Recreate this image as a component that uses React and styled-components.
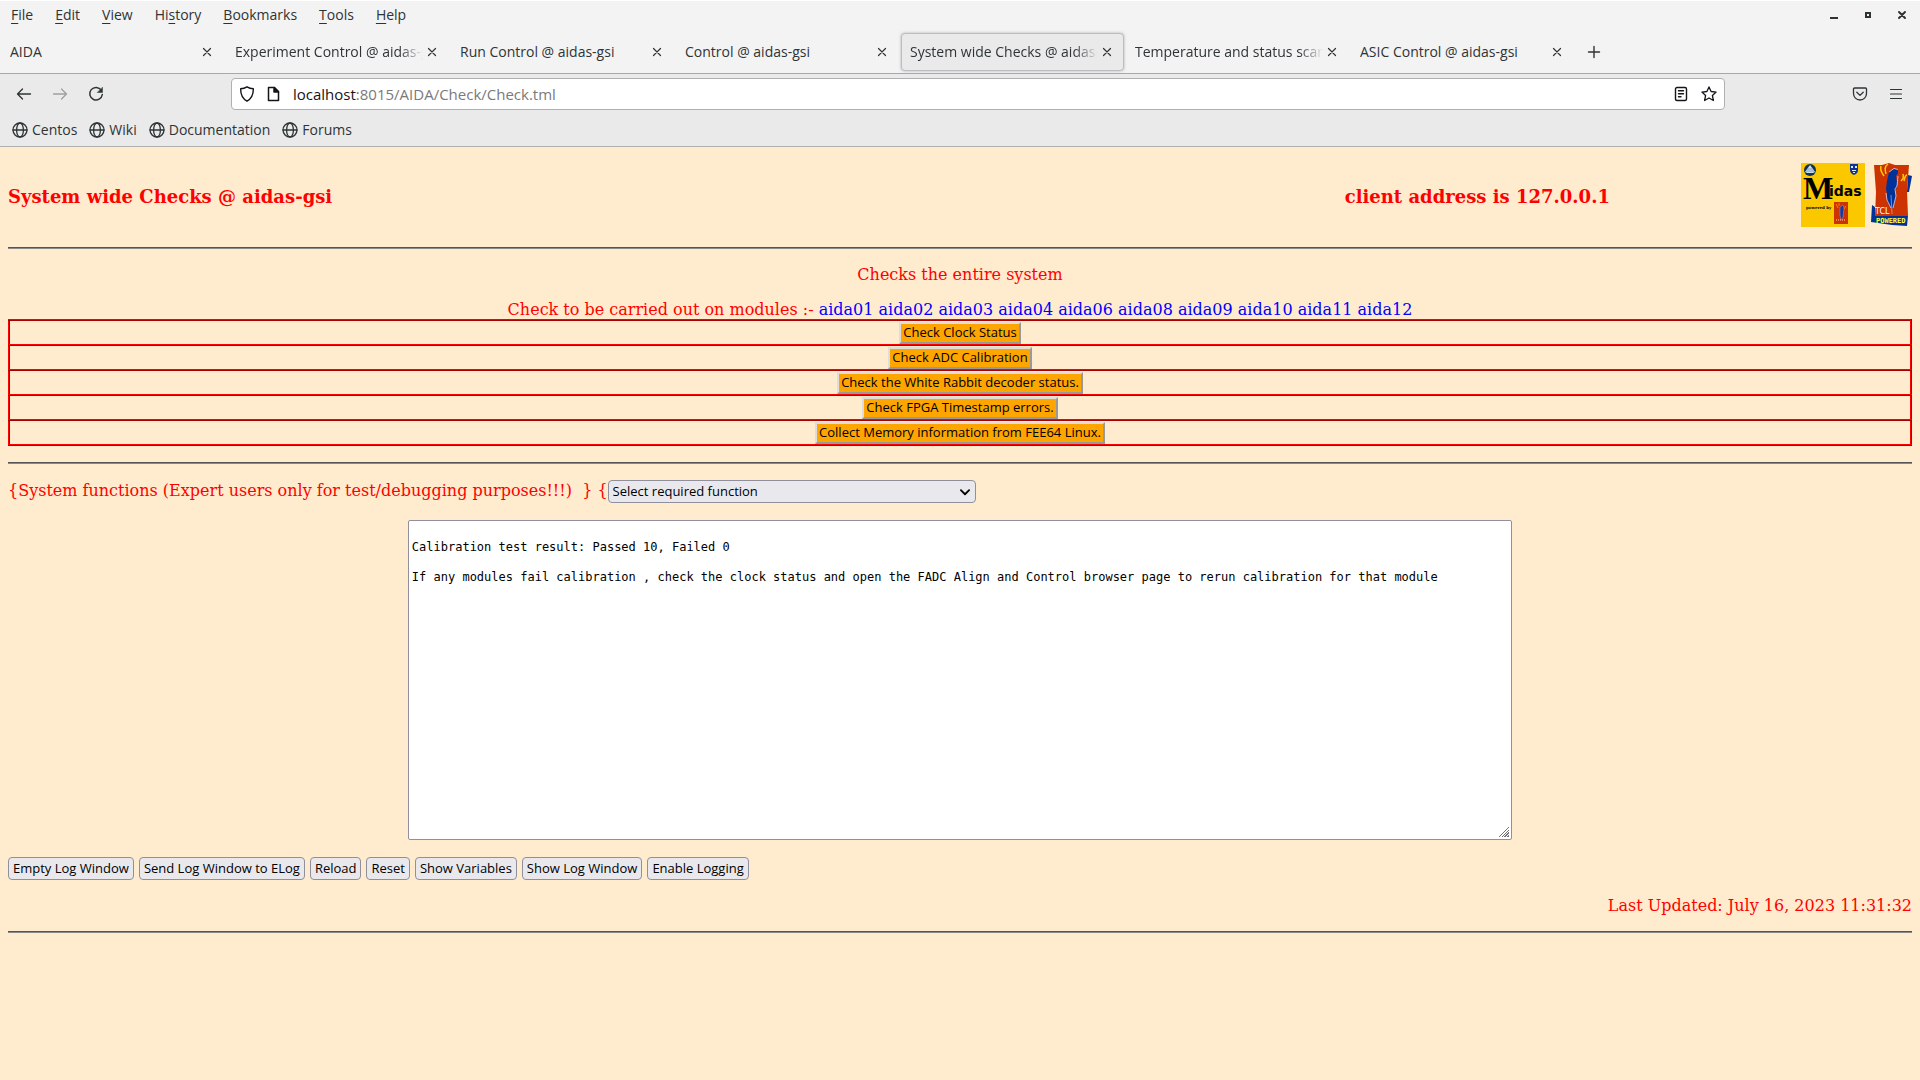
import React, { useState } from "react";
import styled, { createGlobalStyle } from "styled-components";

const GlobalStyle = createGlobalStyle`
  :root {
    --clr-chrome: #f3f3f3;
    --clr-toolbar: #eaeaea;
    --clr-ink: #2e3436;
    --clr-line: #b0b0b0;
    --clr-page: #ffebcd;
    --clr-control: #e9e9ed;
    --clr-edge: #8f8f9d;
    --ff-ui: "Open Sans", "Noto Sans", sans-serif;
    --ff-serif: "DejaVu Serif", serif;
    --ff-mono: "DejaVu Sans Mono", monospace;
  }

  * {
    box-sizing: border-box;
  }

  body {
    margin: 0;
    background: var(--clr-page);
    color: red;
    font-family: var(--ff-serif);
    font-size: 16px;
    line-height: 19px;
  }
`;

/* ---------- browser window ---------- */

const Chrome = styled.header`
  font-family: var(--ff-ui);
  font-size: 14px;
  line-height: 20px;
  color: var(--clr-ink);
  background: var(--clr-chrome);
  border-bottom: 1px solid var(--clr-line);
`;

const MenuBar = styled.div`
  display: flex;
  align-items: center;
  height: 30px;
  padding: 0 9px 1px 0;
  border-top: 1px solid #fff;
`;

const MenuItem = styled.button`
  padding: 0 11px;
  border: 0;
  background: none;
  color: inherit;
  font: inherit;

  u {
    text-underline-offset: 3px;
  }
`;

const WindowButtons = styled.div`
  display: flex;
  gap: 16px;
  margin-left: auto;
`;

const IconButton = styled.button`
  display: grid;
  place-items: center;
  flex: none;
  width: ${(p) => p.$size || 18}px;
  height: ${(p) => p.$size || 18}px;
  padding: 0;
  border: 0;
  background: none;
  color: inherit;
  opacity: ${(p) => (p.disabled ? 0.4 : 1)};
`;

const TabStrip = styled.nav`
  display: flex;
  align-items: center;
  gap: 2px;
  padding: 3px 1px 2px;
  border-bottom: 1px solid #a8a8a8;
`;

const Tab = styled.div`
  display: flex;
  align-items: center;
  flex: 0 1 223px;
  min-width: 0;
  height: 38px;
  padding: 0 7px 0 8px;
  border: 1px solid ${(p) => (p.$active ? "#bcbcc4" : "transparent")};
  border-radius: 4px;
  background: ${(p) => (p.$active ? "var(--clr-toolbar)" : "none")};
  box-shadow: ${(p) => (p.$active ? "0 0 3px rgba(90, 90, 110, 0.4)" : "none")};
`;

const TabLabel = styled.button`
  flex: 1;
  min-width: 0;
  padding: 0;
  border: 0;
  background: none;
  color: inherit;
  font: inherit;
  text-align: left;
  white-space: nowrap;
  overflow: hidden;
  mask-image: ${(p) =>
    p.$fade ? "linear-gradient(to left, transparent, #000 24px)" : "none"};
`;

const NavBar = styled.div`
  display: grid;
  grid-template-columns: 219px 1fr 183px;
  align-items: center;
  padding: 4px 12px;
  background: var(--clr-toolbar);
`;

const NavGroup = styled.div`
  display: flex;
  gap: 12px;
  justify-content: ${(p) => (p.$end ? "flex-end" : "flex-start")};
`;

const UrlBar = styled.div`
  display: flex;
  align-items: center;
  height: 32px;
  padding: 0 3px;
  border: 1px solid var(--clr-line);
  border-radius: 4px;
  background: #fff;
  color: #15141a;
  font-size: 15px;

  .host {
    margin-left: 6px;
  }

  input {
    flex: 1;
    min-width: 0;
    padding: 0;
    border: 0;
    outline: 0;
    background: none;
    color: #7a7a7c;
    font: inherit;
  }
`;

const UrlIcons = styled.div`
  display: flex;
  gap: 4px;
`;

const Bookmarks = styled.div`
  display: flex;
  align-items: center;
  gap: 12px;
  height: 32px;
  padding: 0 12px;
  background: var(--clr-toolbar);
`;

const Bookmark = styled.a`
  display: flex;
  align-items: center;
  gap: 4px;
  color: inherit;
  text-decoration: none;
`;

/* ---------- page ---------- */

const Page = styled.main`
  padding: 16px 8px;
`;

const Rule = styled.hr`
  height: 2px;
  margin: 16px 0;
  border: 0;
  border-top: 1px solid #555;
  border-bottom: 1px solid #888;
`;

const Banner = styled.div`
  display: grid;
  grid-template-columns: 1fr 34% auto;
  align-items: center;
  margin-bottom: 20px;

  h3 {
    margin: 0;
    padding-top: 2px;
    font-size: 18px;
  }

  h3 + h3 {
    text-align: center;
  }
`;

const Logos = styled.div`
  display: flex;
  gap: 6px;

  svg {
    display: block;
  }
`;

const Centered = styled.p`
  margin: 0 0 16px;
  text-align: center;
`;

const Modules = styled.span`
  color: blue;
`;

const CheckTable = styled.table`
  width: 100%;
  border: 2px inset red;
  border-collapse: collapse;

  td {
    height: 25px;
    padding: 0;
    border: 2px inset red;
    text-align: center;
  }
`;

const CheckButton = styled.button`
  display: block;
  height: 22px;
  margin: 0 auto;
  padding: 0 2px 1px;
  border: 2px solid;
  border-color: #ddd #999 #999 #ddd;
  background: orange;
  color: #000;
  font: 13px/17px var(--ff-ui);
`;

const Functions = styled.div`
  display: flex;
  align-items: center;
  margin-bottom: 17px;

  label {
    padding-bottom: 2px;
    white-space: pre;
  }
`;

const SelectBox = styled.div`
  display: grid;
  align-items: center;
  width: 368px;
  color: #000;

  select {
    grid-area: 1 / 1;
    appearance: none;
    height: 23px;
    padding: 0 24px 1px 4px;
    border: 1px solid var(--clr-edge);
    border-radius: 4px;
    background: var(--clr-control);
    color: inherit;
    font: 13px/18px var(--ff-ui);
  }

  svg {
    grid-area: 1 / 1;
    justify-self: end;
    margin-right: 5px;
    pointer-events: none;
  }
`;

const Log = styled.textarea`
  display: block;
  width: 58%;
  height: 320px;
  margin: 0 auto 17px;
  padding: 4px 3px;
  border: 1px solid var(--clr-edge);
  border-radius: 2px;
  background: #fff;
  color: #000;
  font: 12px/15px var(--ff-mono);

  &::-webkit-resizer {
    background: linear-gradient(135deg, #fff 50%, transparent 50%) 2px 2px / 11px
        11px no-repeat,
      repeating-linear-gradient(135deg, #777 0 1px, #fff 1px 2px) 2px 2px / 11px
        11px no-repeat;
  }
`;

const Actions = styled.div`
  display: flex;
  flex-wrap: wrap;
  gap: 5px;
  margin-bottom: 16px;
`;

const ActionButton = styled.button`
  height: 23px;
  padding: 0 4px 2px;
  border: 1px solid var(--clr-edge);
  border-radius: 4px;
  background: var(--clr-control);
  color: #000;
  font: 13px/18px var(--ff-ui);
`;

const Updated = styled.p`
  margin: 0;
  text-align: right;
`;

/* ---------- icons ---------- */

const Icon = ({ size = 16, width = 1.3, children }) => (
  <svg
    width={size}
    height={size}
    viewBox="0 0 16 16"
    fill="none"
    stroke="currentColor"
    strokeWidth={width}
    strokeLinecap="round"
    strokeLinejoin="round"
    aria-hidden="true"
  >
    {children}
  </svg>
);

const Close = () => (
  <Icon width={1.2}>
    <path d="M4.5 4.5l7 7M11.5 4.5l-7 7" />
  </Icon>
);

const Globe = () => (
  <Icon>
    <circle cx="8" cy="8" r="7" />
    <ellipse cx="8" cy="8" rx="3.4" ry="7" />
    <path d="M1 8h14" />
  </Icon>
);

const MidasLogo = () => (
  <svg width="64" height="64" viewBox="0 0 64 64" role="img" aria-label="Midas">
    <rect width="64" height="64" fill="#fbc800" />
    <circle cx="9" cy="7" r="6" fill="#135" />
    <path d="M4 9l2-3 3-4 3 4 2 3-2 1H6z" fill="#cde" />
    <path d="M6 6h6M5 8h8" stroke="#579" strokeWidth="0.6" />
    <path d="M49 1h8v6c0 3-2 4-4 5-2-1-4-2-4-5z" fill="#139" />
    <path d="M50 3h2v2h-2zM54 3h2v2h-2zM51 7h4v1h-4zM52 9h2v1h-2z" fill="#dee" />
    <text x="2" y="36" fontFamily="Liberation Serif, serif" fontWeight="700" fontSize="32">
      M
    </text>
    <text x="28" y="33" fontFamily="DejaVu Sans, sans-serif" fontWeight="700" fontSize="14">
      idas
    </text>
    <text x="5" y="46" fontFamily="DejaVu Serif, serif" fontWeight="700" fontSize="4">
      powered by
    </text>
    <rect x="33" y="39" width="14" height="22" fill="#cc3300" />
    <path d="M35 41l2 4M38 40v3M45 43l-2 3" stroke="#f90" strokeWidth="0.8" />
    <path d="M39 44l3-2 1 3-1 9-2 3-1-5z" fill="#239" stroke="#b9b4dc" strokeWidth="0.4" />
    <path d="M35 57h10" stroke="#fc9" strokeDasharray="1 1" />
  </svg>
);

const TclLogo = () => (
  <svg width="41" height="64" viewBox="0 0 41 64" role="img" aria-label="Tcl powered">
    <path d="M37 12l4 1-3 16h-2zM1 42l3 2v9h33l-1 10-15-1-21-3z" fill="#039" />
    <path d="M3 2l8 0 7-2 6 2 14 0-2 26 1 25H4l1-24z" fill="#cc3300" />
    <path
      d="M10 3c-1 3 0 6 3 10M17 1c-4 3-3 6-2 10M32 11c1 4 0 5-2 7M36 12c-2 0-2 2-3 6"
      fill="none"
      stroke="#fc0"
      strokeWidth="1.5"
    />
    <path
      d="M18 9l4-3 5 0 0 4-2 3 1 6 0 5-2 4 1 5-2 8-2 5-1-1-4-7 0-7-1-5 1-8z"
      fill="#039"
    />
    <path
      d="M18 9l5-3.500 4 1M27 13l-1 10-2 3 1 7-2 8-1 4M15 30l1 7 4 8"
      fill="none"
      stroke="#c9c4e4"
      strokeWidth="0.9"
    />
    <path d="M20 32l1 19" fill="none" stroke="#c9c4e4" strokeWidth="0.6" />
    <text x="4" y="51" fill="#fff" fontFamily="DejaVu Sans, sans-serif" fontSize="8">
      TCL
    </text>
    <text x="5" y="60" fill="#ff3" fontFamily="DejaVu Sans Mono, monospace" fontWeight="700" fontSize="7">
      POWERED
    </text>
  </svg>
);

/* ---------- data ---------- */

// [before, access key, after]
const menus = [
  ["", "F", "ile"],
  ["", "E", "dit"],
  ["", "V", "iew"],
  ["Hi", "s", "tory"],
  ["", "B", "ookmarks"],
  ["", "T", "ools"],
  ["", "H", "elp"],
];

const tabs = [
  { label: "AIDA" },
  { label: "Experiment Control @ aidas-gsi", fade: true },
  { label: "Run Control @ aidas-gsi" },
  { label: "Control @ aidas-gsi" },
  { label: "System wide Checks @ aidas-gsi", fade: true, active: true },
  { label: "Temperature and status scan @ aidas-gsi", fade: true },
  { label: "ASIC Control @ aidas-gsi" },
];

const bookmarks = ["Centos", "Wiki", "Documentation", "Forums"];

const checks = [
  "Check Clock Status",
  "Check ADC Calibration",
  "Check the White Rabbit decoder status.",
  "Check FPGA Timestamp errors.",
  "Collect Memory information from FEE64 Linux.",
];

const actions = [
  "Empty Log Window",
  "Send Log Window to ELog",
  "Reload",
  "Reset",
  "Show Variables",
  "Show Log Window",
  "Enable Logging",
];

const initialLog = `
Calibration test result: Passed 10, Failed 0

If any modules fail calibration , check the clock status and open the FADC Align and Control browser page to rerun calibration for that module
`;

function BrowserChrome() {
  const [path, setPath] = useState(":8015/AIDA/Check/Check.tml");

  return (
    <Chrome>
      <MenuBar>
        {menus.map(([before, key, after]) => (
          <MenuItem key={before + key + after}>
            {before}
            <u>{key}</u>
            {after}
          </MenuItem>
        ))}
        <WindowButtons>
          <IconButton aria-label="Minimise">
            <Icon width={2}>
              <path d="M4 11h8" strokeLinecap="butt" />
            </Icon>
          </IconButton>
          <IconButton aria-label="Maximise">
            <Icon width={2}>
              <path d="M6 6h4v4H6z" strokeLinejoin="miter" />
            </Icon>
          </IconButton>
          <IconButton aria-label="Close window">
            <Icon width={2}>
              <path d="M5 5l6 6M11 5l-6 6" />
            </Icon>
          </IconButton>
        </WindowButtons>
      </MenuBar>
      <TabStrip>
        {tabs.map(({ label, fade, active }) => (
          <Tab key={label} $active={active}>
            <TabLabel $fade={fade}>{label}</TabLabel>
            <IconButton aria-label={`Close ${label}`}>
              <Close />
            </IconButton>
          </Tab>
        ))}
        <IconButton $size={36} aria-label="New tab">
          <Icon width={1.4}>
            <path d="M8 2.5v11M2.5 8h11" />
          </Icon>
        </IconButton>
      </TabStrip>
      <NavBar>
        <NavGroup>
          <IconButton $size={24} aria-label="Back">
            <Icon>
              <path d="M14.5 8H1.5M6.5 3L1.5 8l5 5" />
            </Icon>
          </IconButton>
          <IconButton $size={24} aria-label="Forward" disabled>
            <Icon>
              <path d="M1.5 8h13M9.5 3l5 5-5 5" />
            </Icon>
          </IconButton>
          <IconButton $size={24} aria-label="Reload page">
            <Icon width={1.5}>
              <path d="M13.3 4.2A6.3 6.3 0 1 0 14.3 8.5" />
              <path d="M14.5 1.5v5h-5z" fill="currentColor" strokeWidth="0.5" />
            </Icon>
          </IconButton>
        </NavGroup>
        <UrlBar>
          <IconButton $size={24} aria-label="Tracking protection">
            <Icon width={1.4}>
              <path d="M8 .8c2 1.3 4 1.9 6.3 2 .2 5.5-1.3 9.7-6.3 12.4C3 12.5 1.5 8.3 1.7 2.8 4 2.7 6 2.1 8 .8z" />
            </Icon>
          </IconButton>
          <IconButton $size={28} aria-label="Site information">
            <Icon width={1.5}>
              <path d="M3.5 1.5h6l4 4v9h-10z" />
              <path d="M9 1.5V6h4.5z" fill="currentColor" />
            </Icon>
          </IconButton>
          <span className="host">localhost</span>
          <input
            aria-label="Address"
            value={path}
            onChange={(e) => setPath(e.target.value)}
          />
          <UrlIcons>
            <IconButton $size={24} aria-label="Reader view">
              <Icon width={1.4}>
                <rect x="2.5" y="1.5" width="11" height="13" rx="1.5" />
                <path d="M5.5 4.8h5M5.5 7.8h5M5.5 10.8H8" />
              </Icon>
            </IconButton>
            <IconButton $size={24} aria-label="Bookmark this page">
              <Icon>
                <path d="M8 .9l2.1 4.6 5 .6-3.7 3.4 1 5L8 12l-4.4 2.5 1-5L.9 6.1l5-.6z" />
              </Icon>
            </IconButton>
          </UrlIcons>
        </UrlBar>
        <NavGroup $end>
          <IconButton $size={24} aria-label="Save to Pocket">
            <Icon>
              <path d="M2.5 2h11a1 1 0 0 1 1 1v4.5a6.5 6.5 0 0 1-13 0V3a1 1 0 0 1 1-1z" />
              <path d="M4.8 6.3L8 9.4l3.2-3.1" />
            </Icon>
          </IconButton>
          <IconButton $size={24} aria-label="Application menu">
            <Icon width={1.2}>
              <path d="M2.5 3.5h11M2.5 8h11M2.5 12.5h11" />
            </Icon>
          </IconButton>
        </NavGroup>
      </NavBar>
      <Bookmarks>
        {bookmarks.map((name) => (
          <Bookmark key={name} href="#">
            <Globe />
            {name}
          </Bookmark>
        ))}
      </Bookmarks>
    </Chrome>
  );
}

export default function App() {
  const [log, setLog] = useState(initialLog);

  return (
    <>
      <GlobalStyle />
      <BrowserChrome />
      <Page>
        <Banner>
          <h3>System wide Checks @ aidas-gsi</h3>
          <h3>client address is 127.0.0.1</h3>
          <Logos>
            <MidasLogo />
            <TclLogo />
          </Logos>
        </Banner>
        <Rule />
        <Centered>Checks the entire system</Centered>
        <CheckTable>
          <caption>
            Check to be carried out on modules :-{" "}
            <Modules>
              aida01 aida02 aida03 aida04 aida06 aida08 aida09 aida10 aida11
              aida12
            </Modules>
          </caption>
          <tbody>
            {checks.map((check) => (
              <tr key={check}>
                <td>
                  <CheckButton>{check}</CheckButton>
                </td>
              </tr>
            ))}
          </tbody>
        </CheckTable>
        <Rule />
        <Functions>
          <label htmlFor="function">
            {"{System functions (Expert users only for test/debugging purposes!!!)  } {"}
          </label>
          <SelectBox>
            <select id="function">
              <option>Select required function</option>
            </select>
            <Icon size={12} width={2.4}>
              <path d="M2.5 5.5L8 11l5.5-5.5" />
            </Icon>
          </SelectBox>
        </Functions>
        <Log
          aria-label="Log window"
          spellCheck="false"
          value={log}
          onChange={(e) => setLog(e.target.value)}
        />
        <Actions>
          {actions.map((action) => (
            <ActionButton
              key={action}
              onClick={action === "Empty Log Window" ? () => setLog("") : undefined}
            >
              {action}
            </ActionButton>
          ))}
        </Actions>
        <Updated>Last Updated: July 16, 2023 11:31:32</Updated>
        <Rule />
      </Page>
    </>
  );
}
